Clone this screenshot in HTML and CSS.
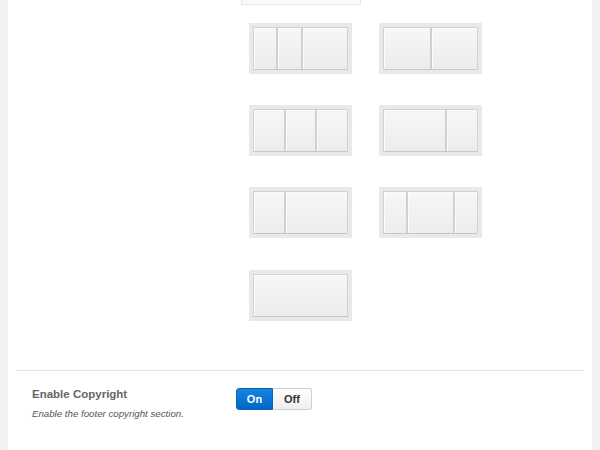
FILE: index.html
```html
<!DOCTYPE html>
<html>
<head>
<meta charset="utf-8">
<link rel="stylesheet" href="styles.css">
</head>
<body>
<div class="panel">
  <div class="options">
    <div class="top-box"></div>
    <div class="layouts">
      <div class="layout"><div class="cols"><div class="col g1"></div><div class="col g1"></div><div class="col g2"></div></div></div>
      <div class="layout"><div class="cols"><div class="col g1"></div><div class="col g1"></div></div></div>
      <div class="layout"><div class="cols"><div class="col g1"></div><div class="col g1"></div><div class="col g1"></div></div></div>
      <div class="layout"><div class="cols"><div class="col g2"></div><div class="col g1"></div></div></div>
      <div class="layout"><div class="cols"><div class="col g1"></div><div class="col g2"></div></div></div>
      <div class="layout"><div class="cols"><div class="col g1"></div><div class="col g2"></div><div class="col g1"></div></div></div>
      <div class="layout last"><div class="cols"><div class="col g1"></div></div></div>
    </div>
  </div>
  <div class="setting">
    <div class="label">
      <div class="title">Enable Copyright</div>
      <div class="desc">Enable the footer copyright section.</div>
    </div>
    <div class="toggle">
      <span class="opt on">On</span><span class="opt off">Off</span>
    </div>
  </div>
</div>
</body>
</html>
```
FILE: styles.css
```css
html, body {
  margin: 0;
  padding: 0;
}
body {
  background: #f1f1f1;
  font-family: "Liberation Sans", Arial, sans-serif;
}
.panel {
  margin: 0 8px;
  background: #fff;
  height: 450px;
  overflow: hidden;
}
.options {
  padding-left: 233px;
}
.top-box {
  width: 118px;
  height: 4px;
  background: #fafafa;
  border: 1px solid #e6e6e6;
  border-top: none;
}
.layouts {
  display: grid;
  grid-template-columns: 103px 103px;
  column-gap: 27px;
  row-gap: 31px;
  margin-top: 18px;
  padding-left: 8px;
}
.layout {
  background: #e9e9e9;
  padding: 4px;
  height: 43px;
}
.layout.last {
  margin-top: 1px;
}
.cols {
  display: flex;
  height: 100%;
  box-sizing: border-box;
  border: 1px solid #d2d2d2;
  border-bottom-color: #c8c8c8;
}
.col {
  flex-basis: 0;
  background: linear-gradient(#f7f7f7, #ececec);
  box-shadow: inset 1px 1px 0 #fcfcfc;
}
.col + .col {
  border-left: 2px solid #d0d0d0;
}
.g1 { flex-grow: 1; }
.g2 { flex-grow: 2; }
.setting {
  margin: 49px 8px 0;
  border-top: 1px solid #e3e3e3;
  padding: 16px 0 0 16px;
  display: flex;
}
.label {
  width: 204px;
}
.title {
  font-size: 11.5px;
  font-weight: bold;
  color: #666;
  line-height: 14px;
}
.desc {
  margin-top: 7px;
  font-size: 9.7px;
  font-style: italic;
  color: #555;
  line-height: 12px;
}
.toggle {
  display: flex;
  height: 22px;
  margin-top: 1px;
}
.opt {
  display: flex;
  align-items: center;
  justify-content: center;
  box-sizing: border-box;
  height: 22px;
  font-size: 11px;
  font-weight: bold;
}
.on {
  width: 37px;
  color: #fff;
  background: linear-gradient(#1685e0, #0066c6);
  border: 1px solid #0a63b8;
  border-radius: 3px 0 0 3px;
}
.off {
  width: 39px;
  color: #333;
  background: linear-gradient(#ffffff, #eeeeee);
  border: 1px solid #cfcfcf;
  border-left: none;
  border-radius: 0 3px 3px 0;
}
```
